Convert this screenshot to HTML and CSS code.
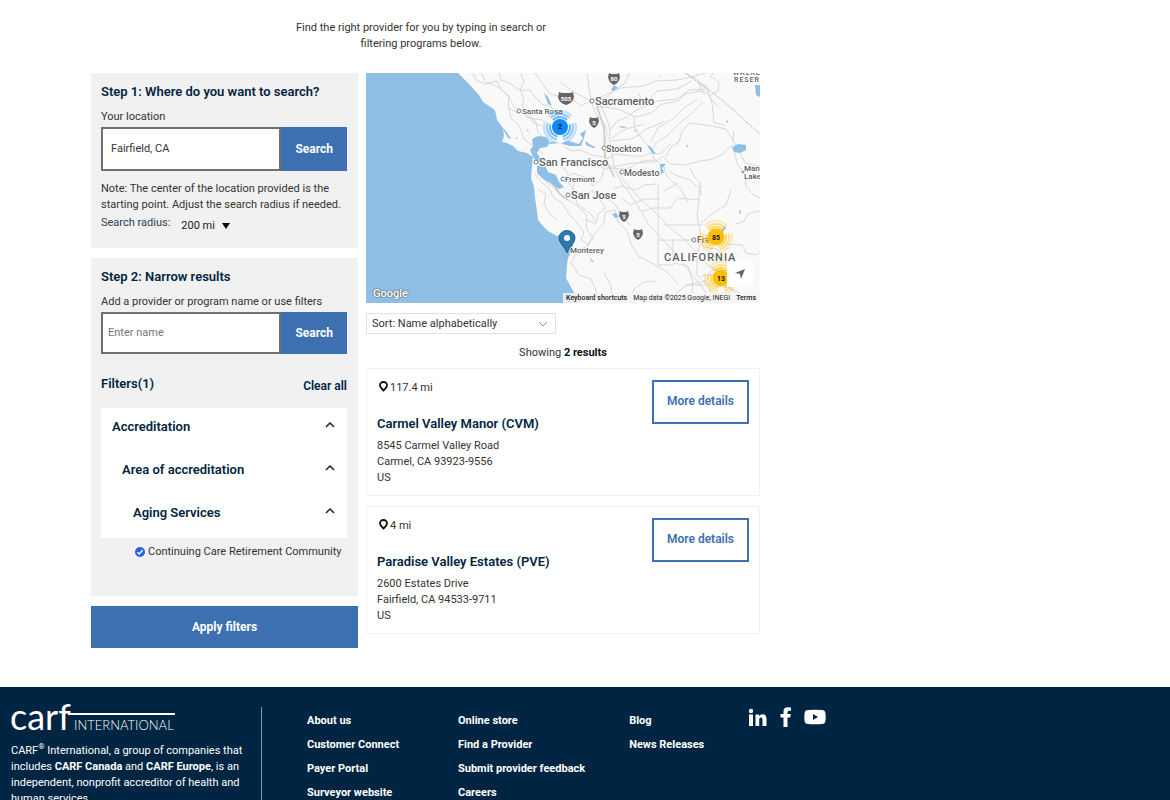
FILE: index.html
```html
<!DOCTYPE html>
<html lang="en">
<head>
<meta charset="utf-8">
<meta name="viewport" content="width=device-width, initial-scale=1">
<title>Find a Provider</title>
<link rel="stylesheet" href="styles.css">
</head>
<body>
<main class="page">
  <p class="intro">Find the right provider for you by typing in search or filtering programs below.</p>
  <div class="finder">
    <aside class="sidebar">
      <form class="panel">
        <h2 class="heading">Step 1: Where do you want to search?</h2>
        <label class="label" for="location">Your location</label>
        <div class="search search-location">
          <input class="field" id="location" type="text" value="Fairfield, CA">
          <button class="btn" type="button">Search</button>
        </div>
        <p class="note">Note: The center of the location provided is the starting point. Adjust the search radius if needed.</p>
        <div class="radius">
          <label class="radius-label" for="radius">Search radius:</label>
          <span class="radius-box">
            <select class="radius-select" id="radius"><option>200 mi</option></select>
            <svg class="radius-arrow" viewBox="0 0 8 6" aria-hidden="true"><path d="M0 0h8L4 6z"/></svg>
          </span>
        </div>
      </form>
      <form class="panel panel-filters">
        <h2 class="heading">Step 2: Narrow results</h2>
        <label class="label" for="name">Add a provider or program name or use filters</label>
        <div class="search search-name">
          <input class="field" id="name" type="text" placeholder="Enter name">
          <button class="btn" type="button">Search</button>
        </div>
        <div class="filters-head">
          <h2 class="heading">Filters(1)</h2>
          <button class="clear" type="button">Clear all</button>
        </div>
        <div class="accordion">
          <button class="fold" type="button">Accreditation<svg class="chevron" viewBox="0 0 10 6"><path d="M1 5l4-4 4 4"/></svg></button>
          <button class="fold fold-2" type="button">Area of accreditation<svg class="chevron" viewBox="0 0 10 6"><path d="M1 5l4-4 4 4"/></svg></button>
          <button class="fold fold-3" type="button">Aging Services<svg class="chevron" viewBox="0 0 10 6"><path d="M1 5l4-4 4 4"/></svg></button>
        </div>
        <div class="choice">
          <span class="check">
            <input class="check-input" id="ccrc" type="checkbox" checked>
            <svg class="check-mark" viewBox="0 0 10 10" aria-hidden="true"><path d="M2.4 5.2l1.8 1.8 3.4-3.8"/></svg>
          </span>
          <label for="ccrc">Continuing Care Retirement Community</label>
        </div>
      </form>
      <button class="btn apply" type="button">Apply filters</button>
    </aside>

    <section class="results">
      <div class="map">
        <svg class="map-art" viewBox="0 0 394 230" preserveAspectRatio="xMidYMid slice" role="img" aria-label="Map of California">
          <rect width="394" height="230" class="land"/>
          <g class="road">
            <path d="M107 0l3 7 9 4 12-3 4 8 8 8-1 8 3 13 9 9 4 12 8 6 11 9"/>
            <path d="M115 0l5 9 12 5 10 8 6 12 11 7 11 8 2 11 8 6"/>
            <path d="M133 0l2 7 10 4 8 6 11 0 4 6 8 8 9 3 7 7 2 9"/>
            <path d="M155 0l3 9-4 8 4 8-2 8 7 6 4 11 9 3M143 35l8 5 4-2 7 7 14 2 8 4"/>
            <path d="M169 0l7 10 8 11 14 4 10 2 7 6 11-6"/>
            <path d="M225 28l-4-28M225 28l-15-8-15-10M225 28l5 13 9 10 2 10-3 14 1 12 11 12 5 10 9 12 11 17 8 14 9 10 12 12 8 11 12 14 9 11 9 12 9 13"/>
            <path d="M230 28l5 5 6 13 3 11-1 9 2 8 3 19 11 16 13 15 17 15 14 15 15 12 13 14 11 12 12 9 11 16 11 8"/>
            <path d="M225 28l16-7 14-6 23-2 11-5 22-1 14-3 15-4 0-5"/>
            <path d="M235 28l14-11 10-7 4-10M230 33l22 3 18 8 15-4 11-9 16-3 7-7 15-3 5 3"/>
            <path d="M244 57l7-9 10-4 8-6 22-10 20-2 12-9 17-1M268 43l1 14 10 12 6 7 3 10 10 8 3 10 14 12 7 14"/>
            <path d="M245 68l20-2 10-5 3-4 10-4 11-5M245 66l12-9 21-6M285 69l7-14 16-10 11-11 12-7M286 78l4-8 12-8 8-9 15-12 12-12"/>
            <path d="M239 87l10-6 16 2 14 0 4-3 12 1 9-10M247 94l19-4 23-1 9-6"/>
            <path d="M300 83l5-9 8-5 3-11 8-8 8 1 14 2 14 3 7 11 5 9 7 14 8 2 10 2 5-4M298 85l7 6 14 1 16-4 12-2 10-5 6-7 9-2"/>
            <path d="M319 0l14 8 2 9 8 4 3 9 2 20 11 2M343 23l9-5 1-9-8-5 2-4M343 23l-2-9-9-5M343 23l10 12M326 8l-15 8-20 2-7 7"/>
            <path d="M368 76l3 14 8 12 1 12 8 8 6 3M368 58l-1 10"/>
            <path d="M198 74l8 4 9-1 10 5 13 2M200 86l13 4 12-4 13 9-2 10-9 8-6-8-15-5-4 10 7 8 2 13 14 10 4 7"/>
            <path d="M174 97l6 12 9 6 6 8 9 5 11 8 6 7-1 12 7 10-6 9-9 3-7 13 8 12 12 4 6 14 5 14"/>
            <path d="M169 101l7 9 7 5 4 9 10 7 6 10 7 8 8 10-3 8 8 5M172 116l8 5-2 10 5 9 9 8"/>
            <path d="M198 95l5 8 6 5-3 9 9 9 11-8 12 5 12 9 6 13 9 7"/>
            <path d="M221 173l8-13 9-10 1-11 10-2 3 12 9 9 4 13 7 12 14 7 14 8 12 13M219 146l11 5 2-10 8-6-6-8"/>
            <path d="M239 95l22 1 15-8 13-1M248 116l8-3 14 4 8-5 12-1M256 125l8 7 14-6 16 0M292 112l0 28 0 27 0 25 15 0M292 167l32 0 12-4M298 152l39 0M307 168l0 22 15 3 5 16-2 20M276 138l11-3 17 0 8-10 22 2M333 112l0 16-2 14 4 21-4 23 0 16 13 12 0 16"/>
            <path d="M331 163l7 11 13 2 7 9M335 150l15-12 10-6 5-15M370 151l8-3 5-8 11-2M362 171l14 1 4 8 10 2 4-3M335 203l13-2 8 3M319 212l25 0M309 221l12-9 19-4 5-10 11-4"/>
            <path d="M304 99l8 4 12 4 7 7M324 95l5 10 5 4 1 14M298 118l14-8M272 20l4 7M351 209l25 12M263 230l5-14 10-7 11-1M246 228l-1-15-7-13"/>
          </g>
          <path class="roadwide" d="M174 95l9 12 7 8 4 6 8 6M230 30l8 25 1 29 9 20"/>
          <path class="border" d="M319 0l28 20 17 14 30 27"/>
          <g class="water">
            <path d="M92 0l10 10 11 12 4 7 12 8 2 10 6 8 1 8-2 6 5 1 6 3 5 5 9 2 6 4-1 9-1 12 3 9 1 11 2 13 1 9 4 5 6 6 9 5 3-1 7 0 5 5 1 8-5 10-1 7-1 13 7 13 8 10 4 5 3 10H0V0z"/>
            <path d="M166 66l6-3 8 1 4 5-3 5-7 1-3 5 4 6-2 5-6-7-3-7 3-4z"/>
            <path d="M171 93l7-3 4 9 8 3 3 7 5 5-5 2-7-5-9-5-6-6zM183 69l13 1 7-2 10 3 4-6-3-4 6-4-2 8-3 8-12 0-9-3-10 1z"/>
            <path d="M178 20l4 4 4 9-4-2zM136 54l4 4 5 8-3-1zM150 64l2 1-2 1zM245 17l3-5 4 3-5 3zM219 68l6 4 5 2-3 1-7-3zM281 72l4 2 5 7-4-1zM253 53l9 1-6 1zM294 91l6 0-4 4 2 4-3 2zM268 59l4-3-3 1zM366 75l6-4 8 1 0 5-6 3-6-1zM389 12l5 0v12l-4-2zM246 141l4-1 3 4-4 1zM292 4l2-1v1zM354 158l5-5 1 2-4 5zM160 56l3 2-1 1zM373 137l2 1-1 4zM360 48l2-1-1 4zM223 184l5 5-2 0zM321 71l1 3h-2z"/>
          </g>
          <g class="shield">
            <path d="M243 0l2 1h6l2-1 1 4q-1 6-6 8q-5-2-6-8zM193 19l3 1h8l3-1 1 5q-1 6-8 8q-7-2-8-8zM224 44l2 1h4l2-1 1 4q-1 5-5 7q-4-2-5-7zM254 138l2 1h4l2-1 1 4q-1 5-5 7q-4-2-5-7zM268 156l2 1h4l2-1 1 4q-1 5-5 7q-4-2-5-7z"/>
          </g>
          <g class="shieldtext"><text x="248" y="8">80</text><text x="200" y="28">505</text><text x="228" y="52">5</text><text x="258" y="146">5</text><text x="272" y="164">5</text></g>
          <g class="town"><circle cx="153" cy="38" r="2"/><circle cx="226" cy="28" r="2"/><circle cx="170" cy="89" r="2"/><circle cx="238" cy="75" r="2"/><circle cx="256" cy="99" r="2"/><circle cx="197" cy="106" r="2"/><circle cx="202" cy="122" r="2"/><circle cx="328" cy="167" r="2"/><circle cx="377" cy="99" r="1"/></g>
          <g class="place">
            <text x="156" y="41" class="small">Santa Rosa</text>
            <text x="229" y="32">Sacramento</text>
            <text x="173" y="93">San Francisco</text>
            <text x="240" y="79" class="mid">Stockton</text>
            <text x="258" y="103" class="mid">Modesto</text>
            <text x="199" y="109" class="small">Fremont</text>
            <text x="205" y="126">San Jose</text>
            <text x="204" y="180" class="small">Monterey</text>
            <text x="331" y="170" class="mid">Fre</text>
            <text x="378" y="98" class="small">Man</text>
            <text x="378" y="106" class="small">Lake</text>
          </g>
          <text x="298" y="188" class="state">CALIFORNIA</text>
          <g class="reserve"><text x="367" y="2">WALKE</text><text x="368" y="9">RESER</text></g>
          <g class="cluster blue">
            <g transform="translate(194 54) rotate(-135)"><circle r="16" pathLength="12" class="ring faint"/><circle r="13" pathLength="12" class="ring soft"/><circle r="10" pathLength="12" class="ring"/></g>
            <circle class="core" cx="194" cy="54" r="8"/><text x="194" y="56">2</text>
          </g>
          <g class="cluster gold">
            <g transform="translate(350 164) rotate(-135)"><circle r="16" pathLength="12" class="ring faint"/><circle r="13" pathLength="12" class="ring soft"/><circle r="10" pathLength="12" class="ring"/></g>
            <circle class="core" cx="350" cy="164" r="8.500"/><text x="350" y="167">85</text>
            <g transform="translate(355 205) rotate(-135)"><circle r="16" pathLength="12" class="ring faint"/><circle r="13" pathLength="12" class="ring soft"/><circle r="10" pathLength="12" class="ring"/></g>
            <circle class="core" cx="355" cy="205" r="8.500"/><text x="355" y="208">13</text>
          </g>
          <path class="pin" d="M201 180q-2-5-5-8q-3-4-3-7a8 7.500 0 0 1 16 0q0 3-3 7q-3 3-5 8z"/>
          <circle cx="201" cy="165" r="3" fill="#fff"/>
        </svg>
        <span class="google">Google</span>
        <button class="locate" type="button" aria-label="Show my location"><svg viewBox="0 0 10 10"><path d="M10 0L6 10 5 5 0 4z"/></svg></button>
        <div class="credits"><button class="keys" type="button">Keyboard shortcuts</button><span>Map data ©2025 Google, INEGI</span><a class="terms" href="#terms">Terms</a></div>
      </div>

      <div class="sort">
        <select class="sort-select" aria-label="Sort results"><option>Sort: Name alphabetically</option></select>
        <svg class="sort-arrow" viewBox="0 0 10 6" aria-hidden="true"><path d="M1 1l4 4 4-4"/></svg>
      </div>
      <p class="count">Showing <b>2 results</b></p>

      <article class="card">
        <div class="card-body">
          <p class="distance"><svg class="place-pin" viewBox="0 0 9 11"><path d="M4.500 9.500Q1 6.500 1 4.300a3.500 3.300 0 0 1 7 0Q8 6.500 4.500 9.500z"/></svg>117.4 mi</p>
          <h3 class="heading">Carmel Valley Manor (CVM)</h3>
          <address class="address">8545 Carmel Valley Road<br>Carmel, CA 93923-9556<br>US</address>
        </div>
        <a class="details" href="#cvm">More details</a>
      </article>
      <article class="card">
        <div class="card-body">
          <p class="distance"><svg class="place-pin" viewBox="0 0 9 11"><path d="M4.500 9.500Q1 6.500 1 4.300a3.500 3.300 0 0 1 7 0Q8 6.500 4.500 9.500z"/></svg>4 mi</p>
          <h3 class="heading">Paradise Valley Estates (PVE)</h3>
          <address class="address">2600 Estates Drive<br>Fairfield, CA 94533-9711<br>US</address>
        </div>
        <a class="details" href="#pve">More details</a>
      </article>
    </section>
  </div>
</main>

<footer class="footer">
  <div class="about">
    <svg class="logo" viewBox="0 0 166 26" role="img" aria-label="carf International">
      <text class="logo-name" x="-1" y="23">carf</text>
      <rect x="57" y="6" width="107" height="2"/>
      <text class="logo-sub" x="63" y="23">INTERNATIONAL</text>
    </svg>
    <p class="blurb">CARF<sup>®</sup> International, a group of companies that includes <b>CARF Canada</b> and <b>CARF Europe</b>, is an independent, nonprofit accreditor of health and human services.</p>
  </div>
  <nav class="links">
    <a href="#about">About us</a><a href="#connect">Customer Connect</a><a href="#payer">Payer Portal</a><a href="#surveyor">Surveyor website</a>
  </nav>
  <nav class="links">
    <a href="#store">Online store</a><a href="#find">Find a Provider</a><a href="#feedback">Submit provider feedback</a><a href="#careers">Careers</a>
  </nav>
  <nav class="links links-news">
    <a href="#blog">Blog</a><a href="#news">News Releases</a>
  </nav>
  <div class="social">
    <a href="#linkedin" aria-label="LinkedIn"><svg width="19" height="20" viewBox="0 0 19 20"><circle cx="3" cy="4" r="2.200"/><path d="M1 7.500h4V19H1zM7.500 7.500H11V9q1.200-1.800 3.600-1.800Q18.500 7.200 18.500 12v7h-4v-6.200q0-2.300-1.600-2.300-1.700 0-1.700 2.300V19H7.500z"/></svg></a>
    <a href="#facebook" aria-label="Facebook"><svg width="12" height="20" viewBox="0 0 12 20"><path d="M3.500 20v-9.500H.5V7h3V4.500Q3.500.3 7.800.3q2 0 3.200.3v3.200H9.200q-1.700 0-1.700 1.600V7h3.300l-.6 3.500H7.500V20z"/></svg></a>
    <a href="#youtube" aria-label="YouTube"><svg width="22" height="20" viewBox="0 0 22 20"><path fill-rule="evenodd" d="M4 3q7-.6 14 0 3 .2 3.400 3 .6 4 0 8-.4 2.800-3.400 3-7 .6-14 0-3-.2-3.400-3-.6-4 0-8Q1 3.200 4 3zm5 4v6l5-3z"/></svg></a>
  </div>
</footer>
</body>
</html>
```
FILE: styles.css
```css
* { box-sizing: border-box; }
body { margin: 0; background: #fff; color: #333; font: 11px/16px Roboto, "Liberation Sans", sans-serif; }
p, h2, h3 { margin: 0; }
button, input, select { font: inherit; color: inherit; border-radius: 0; }
button { cursor: pointer; }
a { color: inherit; text-decoration: none; }

.page { max-width: 760px; padding: 20px 0 39px 91px; }
.intro { max-width: 250px; margin: 0 auto 21px 205px; text-align: center; }
.finder { display: grid; grid-template-columns: 267fr 394fr; gap: 8px; align-items: start; }
.sidebar { display: flex; flex-direction: column; gap: 10px; }
.panel { display: flex; flex-direction: column; padding: 11px 11px 14px 10px; background: #f1f1f1; }
.panel-filters { padding-bottom: 36px; }
.heading { color: #002542; font-size: 13px; line-height: 16px; font-weight: 600; }
.label { margin: 9px 0 2px; }
.search { display: flex; }
.search-location { height: 44px; }
.search-name { height: 42px; }
.field { flex: 1; min-width: 0; padding: 0 7px; background: #fff; border: 2px solid #707070; }
.search-location .field { padding-left: 8px; }
.search-name .field { padding-left: 5px; }
.field::placeholder { color: #757575; opacity: 1; }
.btn { padding: 0 14px; border: 0; background: #3c70b0; color: #fff; font-size: 12px; font-weight: 700; }
.apply { height: 42px; }
.note { margin: 10px -4px 2px 0; }
.radius { display: flex; gap: 11px; }
.radius-label { color: #27415a; }
.radius-box { display: flex; align-items: center; gap: 7px; padding-top: 3px; }
.radius-select { appearance: none; border: 0; padding: 0; background: none; color: #222; }
.radius-arrow { width: 8px; height: 6px; }
.filters-head { display: flex; justify-content: space-between; align-items: center; margin: 20px 0 14px; }
.clear { padding: 4px 0 0; border: 0; background: none; color: #002542; font-size: 12px; font-weight: 600; }
.accordion { display: flex; flex-direction: column; background: #fff; }
.fold { display: flex; justify-content: space-between; align-items: flex-start; height: 43px; padding: 11px 12px 0 11px; border: 0; background: none; color: #002542; font-size: 13px; font-weight: 600; text-align: left; }
.fold-2 { padding-left: 21px; }
.fold-3 { height: 44px; padding-left: 32px; }
.chevron { width: 10px; height: 6px; margin-top: 3px; fill: none; stroke: #222; stroke-width: 1.500; }
.choice { display: flex; align-items: center; gap: 3px; margin-right: -10px; padding: 6px 0 0 34px; }
.check { position: relative; display: flex; }
.check-input { appearance: none; width: 10px; height: 10px; margin: 0; border-radius: 50%; background: #2563eb; }
.check-mark { position: absolute; inset: 0; fill: none; stroke: #fff; stroke-width: 1.500; pointer-events: none; }

.map { position: relative; height: 230px; overflow: hidden; }
.map-art { display: block; width: 100%; height: 100%; }
.land { fill: #f9f9f9; }
.road { fill: none; stroke: #d8d8d8; stroke-width: 1; stroke-linejoin: round; }
.roadwide { fill: none; stroke: #cacaca; stroke-width: 1.500; }
.border { fill: none; stroke: #bbb; stroke-dasharray: 2 1; }
.water { fill: #90bfe6; }
.shield { fill: #666; }
.shieldtext { fill: #fff; font-size: 6px; font-weight: 700; text-anchor: middle; }
.town { fill: #fff; stroke: #777; }
.place, .state, .reserve { fill: #5c5c5c; stroke: #fff; stroke-width: 2px; paint-order: stroke; stroke-linejoin: round; font-weight: 500; }
.place { font-size: 11px; }
.place .mid { font-size: 9px; }
.place .small { font-size: 8px; }
.state { font-size: 11px; letter-spacing: 1px; }
.reserve { font-size: 7px; letter-spacing: 1px; }
.cluster text { fill: #111; font-size: 7px; font-weight: 700; text-anchor: middle; }
.ring { fill: none; stroke-width: 2; stroke-dasharray: 3 1; stroke-opacity: .6; }
.soft { stroke-opacity: .45; }
.faint { stroke-opacity: .25; }
.blue .ring { stroke: #0a8bff; }
.blue .core { fill: #0a8bff; }
.gold .ring { stroke: #ffbf00; }
.gold .core { fill: #ffbf00; }
.pin { fill: #2b78ac; stroke: #20618e; stroke-width: 1; }
.google { position: absolute; left: 7px; bottom: 1px; color: #fff; font-size: 11px; font-weight: 500; text-shadow: 0 0 2px #555, 0 0 1px #555; }
.locate { position: absolute; right: 7px; bottom: 16px; display: grid; place-items: center; width: 26px; height: 26px; padding: 0; border: 0; background: #fff; }
.locate svg { width: 10px; height: 10px; fill: #666; }
.credits { position: absolute; right: 0; bottom: 0; display: flex; gap: 6px; padding: 0 4px 0 3px; background: rgba(245, 245, 245, .85); color: #222; font-size: 7px; line-height: 10px; }
.keys { padding: 0; border: 0; background: none; font-weight: 500; line-height: 10px; }
.terms { font-weight: 500; }

.sort { position: relative; width: 190px; margin-top: 10px; }
.sort-select { display: block; appearance: none; width: 100%; height: 21px; padding: 0 5px; border: 1px solid #dce3ea; background: #fff; }
.sort-arrow { position: absolute; right: 8px; top: 8px; width: 10px; height: 6px; fill: none; stroke: #999; pointer-events: none; }
.count { margin: 11px 0 7px; text-align: center; }
.count b { color: #111; }
.card { display: flex; justify-content: space-between; align-items: flex-start; margin-bottom: 10px; padding: 10px 10px 9px; border: 1px solid #f1f1f1; }
.card-body { padding-top: 1px; }
.distance { display: flex; gap: 2px; margin-bottom: 20px; }
.place-pin { width: 9px; height: 11px; margin: 1px 0 0 2px; fill: none; stroke: #111; stroke-width: 1.800; }
.address { margin-top: 6px; font-style: normal; }
.details { margin-top: 1px; padding: 11px 13px 13px; border: 2px solid #3c70b0; color: #3c70b0; font-size: 12px; font-weight: 600; }

.footer { display: flex; align-items: flex-start; padding: 20px 11px; background: #002542; color: #fff; }
.about { width: 251px; min-height: 112px; margin-right: 45px; padding-right: 6px; border-right: 1px solid #8896a4; }
.logo { display: block; width: 166px; height: 26px; margin-bottom: 10px; overflow: visible; fill: #fff; }
.logo-name { font-family: Lato, sans-serif; font-size: 36px; font-weight: 400; }
.logo-sub { font-family: Lato, sans-serif; font-size: 13px; font-weight: 300; }
.blurb sup { font-size: 8px; line-height: 0; }
.links { display: flex; flex-direction: column; gap: 8px; padding-top: 6px; font-weight: 700; }
.links + .links { margin-left: 49px; }
.links:first-of-type { width: 102px; }
.links + .links-news { margin-left: 44px; }
.links a { white-space: nowrap; }
.social { display: flex; gap: 13px; margin-left: 44px; fill: #fff; }
.social svg { display: block; }
.social a:last-child { margin-left: -1px; }
```
